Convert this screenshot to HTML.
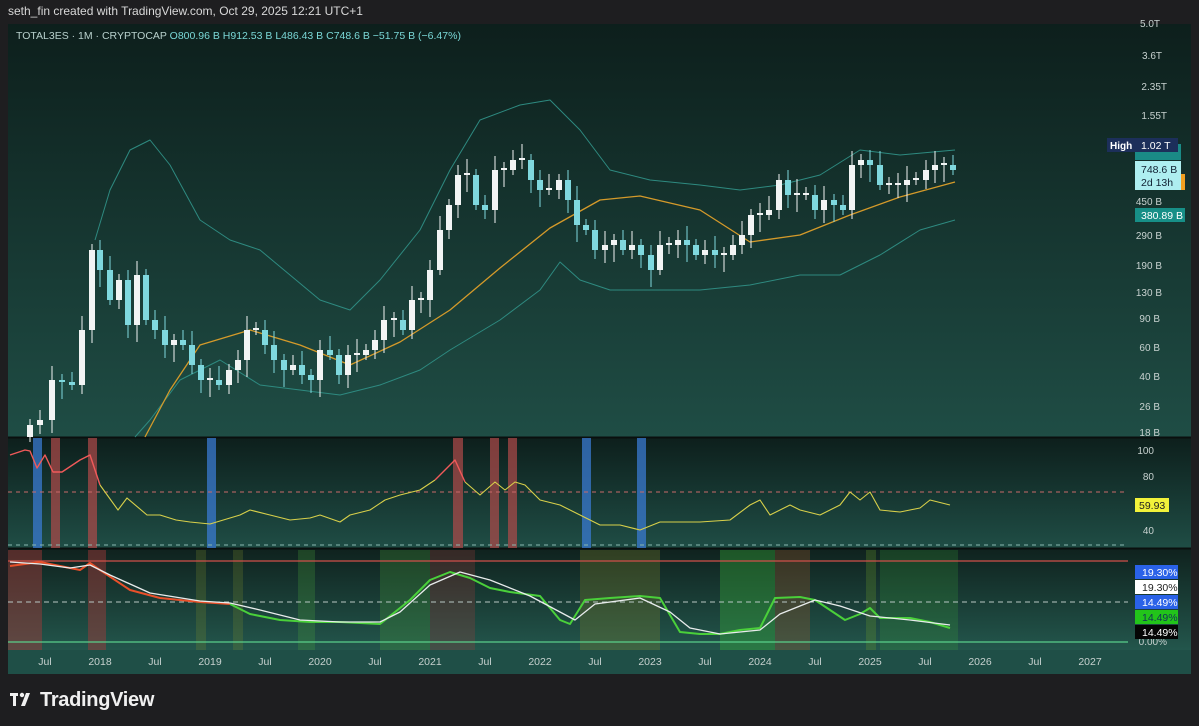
<!DOCTYPE html>
<html><head><meta charset="utf-8">
<style>
html,body{margin:0;padding:0;background:#1e1e20;width:1199px;height:726px;overflow:hidden;font-family:"Liberation Sans",sans-serif;}
#hdr{position:absolute;left:8px;top:4px;color:#d8d8d8;font-size:12px;}
#wrap{position:absolute;left:0;top:0;}
#logo{position:absolute;left:40px;top:689px;color:#f0f0f0;font-size:20px;font-weight:bold;letter-spacing:-0.3px;}
</style></head><body>
<div id="hdr">seth_fin created with TradingView.com, Oct 29, 2025 12:21 UTC+1</div>
<svg id="wrap" width="1199" height="726" xmlns="http://www.w3.org/2000/svg" font-family="Liberation Sans, sans-serif">
<defs>
<linearGradient id="gm" x1="0" y1="0" x2="0" y2="1"><stop offset="0" stop-color="#0d1f1c"/><stop offset="1" stop-color="#1f4d45"/></linearGradient>
<linearGradient id="gr" x1="0" y1="0" x2="0" y2="1"><stop offset="0" stop-color="#0d1f1c"/><stop offset="1" stop-color="#1f4d45"/></linearGradient>
<linearGradient id="gb" x1="0" y1="0" x2="0" y2="1"><stop offset="0" stop-color="#0f221e"/><stop offset="1" stop-color="#23564c"/></linearGradient>
</defs>
<rect x="8" y="24" width="1183" height="650" fill="#1f4d45"/>
<rect x="8" y="24" width="1183" height="413" fill="url(#gm)"/>
<rect x="8" y="438" width="1183" height="110" fill="url(#gr)"/>
<rect x="8" y="549" width="1183" height="101" fill="url(#gb)"/>
<rect x="8" y="650" width="1183" height="24" fill="#1f4f47"/>
<line x1="8" y1="437.5" x2="1191" y2="437.5" stroke="#0a0f0e" stroke-width="2"/>
<line x1="8" y1="548.5" x2="1191" y2="548.5" stroke="#0a0f0e" stroke-width="2"/>
<g id="bands"></g>
<g id="main"></g>
<text x="16" y="39" font-size="10.5" fill="#b8d0cc">TOTAL3ES · 1M · CRYPTOCAP <tspan fill="#7ad7d6">O800.96 B  H912.53 B  L486.43 B  C748.6 B  −51.75 B (−6.47%)</tspan></text>
<g font-size="10" fill="#c8d2d0" text-anchor="end">
<text x="1160" y="27">5.0T</text><text x="1162" y="59">3.6T</text><text x="1167" y="90">2.35T</text><text x="1167" y="119">1.55T</text>
<text x="1162" y="205">450 B</text><text x="1162" y="239">290 B</text><text x="1162" y="269">190 B</text><text x="1162" y="296">130 B</text>
<text x="1160" y="322">90 B</text><text x="1160" y="351">60 B</text><text x="1160" y="380">40 B</text><text x="1160" y="410">26 B</text><text x="1160" y="436">18 B</text>
<text x="1154" y="454">100</text><text x="1154" y="480">80</text><text x="1154" y="534">40</text>
<text x="1167" y="645">0.00%</text>
</g>
<rect x="1107" y="138" width="30" height="14" fill="#1c2f5a"/><text x="1110" y="149" font-size="10" font-weight="bold" fill="#fff">High</text>
<rect x="1135" y="144" width="46" height="16" fill="#1a8a86"/>
<rect x="1135" y="138" width="43" height="14" fill="#1c2f5a"/><text x="1141" y="149" font-size="10.5" fill="#fff">1.02 T</text>
<rect x="1180" y="174" width="5" height="16" fill="#f0a020"/>
<rect x="1135" y="161" width="46" height="29" fill="#aeeef0"/><text x="1141" y="173" font-size="10.5" fill="#123">748.6 B</text><text x="1141" y="186" font-size="10.5" fill="#123">2d 13h</text>
<rect x="1135" y="208" width="50" height="14" fill="#178f87"/><text x="1141" y="219" font-size="10.5" fill="#fff">380.89 B</text>
<rect x="1135" y="498" width="34" height="14" fill="#f2f23a"/><text x="1139" y="509" font-size="10.5" fill="#222">59.93</text>
<rect x="1135" y="565" width="43" height="14" fill="#2a62e8"/><text x="1142" y="576" font-size="10.5" fill="#fff">19.30%</text>
<rect x="1135" y="580" width="43" height="14" fill="#ffffff"/><text x="1142" y="591" font-size="10.5" fill="#222">19.30%</text>
<rect x="1135" y="595" width="43" height="14" fill="#2a62e8"/><text x="1142" y="606" font-size="10.5" fill="#fff">14.49%</text>
<rect x="1135" y="610" width="43" height="14" fill="#22c41a"/><text x="1142" y="621" font-size="10.5" fill="#135">14.49%</text>
<rect x="1135" y="625" width="43" height="14" fill="#050505"/><text x="1142" y="636" font-size="10.5" fill="#fff">14.49%</text>
<g font-size="10.5" fill="#c8d2d0" text-anchor="middle">
<text x="45" y="665">Jul</text><text x="100" y="665">2018</text><text x="155" y="665">Jul</text><text x="210" y="665">2019</text><text x="265" y="665">Jul</text><text x="320" y="665">2020</text><text x="375" y="665">Jul</text><text x="430" y="665">2021</text><text x="485" y="665">Jul</text><text x="540" y="665">2022</text><text x="595" y="665">Jul</text><text x="650" y="665">2023</text><text x="705" y="665">Jul</text><text x="760" y="665">2024</text><text x="815" y="665">Jul</text><text x="870" y="665">2025</text><text x="925" y="665">Jul</text><text x="980" y="665">2026</text><text x="1035" y="665">Jul</text><text x="1090" y="665">2027</text>
</g>
<g transform="translate(10,691)" fill="#f0f0f0"><rect x="0" y="2" width="8" height="3"/><rect x="3" y="2" width="3" height="13"/><circle cx="12" cy="4" r="2.2"/><path d="M16 2 L20 2 L15 15 L11 15 Z"/></g>
</svg>
<div id="logo">TradingView</div>
<script>
var NS="http://www.w3.org/2000/svg";
function el(p,t,a){var e=document.createElementNS(NS,t);for(var k in a)e.setAttribute(k,a[k]);document.getElementById(p).appendChild(e);return e;}
function pl(p,pts,c,w,d){el(p,"polyline",{points:pts.map(function(q){return q.join(",")}).join(" "),fill:"none",stroke:c,"stroke-width":w||1.2,"stroke-dasharray":d||"","stroke-linejoin":"round"});}
[[33,9,"#3a7ad0",.75],[207,9,"#3a7ad0",.75],[582,9,"#3a7ad0",.75],[637,9,"#3a7ad0",.75],[51,9,"#b04a4a",.7],[88,9,"#b04a4a",.7],[453,10,"#b04a4a",.7],[490,9,"#b04a4a",.7],[508,9,"#b04a4a",.7]].forEach(function(b){el("bands","rect",{x:b[0],y:438,width:b[1],height:110,fill:b[2],opacity:b[3]});});
[[8,34,"#a83a3a",.45],[88,18,"#a83a3a",.45],[196,10,"#7a8a2a",.25],[233,10,"#7a8a2a",.25],[298,17,"#4aa83a",.25],[380,50,"#4aa83a",.25],[430,45,"#a83a3a",.25],[580,80,"#8a8a2a",.28],[720,55,"#3ab83a",.35],[775,35,"#a85a2a",.28],[866,10,"#6a9a2a",.28],[880,78,"#3aa83a",.22]].forEach(function(b){el("bands","rect",{x:b[0],y:550,width:b[1],height:100,fill:b[2],opacity:b[3]});});
el("bands","line",{x1:8,y1:561,x2:1128,y2:561,stroke:"#d0504a","stroke-width":1.2});
el("bands","line",{x1:8,y1:602,x2:1128,y2:602,stroke:"#b8c8c4","stroke-dasharray":"5,4"});
el("bands","line",{x1:8,y1:642,x2:1128,y2:642,stroke:"#5ad08a","stroke-width":1.2});
el("bands","line",{x1:8,y1:492,x2:1128,y2:492,stroke:"#c86a6a","stroke-dasharray":"4,4"});
el("bands","line",{x1:8,y1:545,x2:1128,y2:545,stroke:"#8ab8b0","stroke-dasharray":"4,4"});
pl("main",[[95,240],[110,190],[130,150],[150,140],[170,165],[200,220],[230,240],[260,250],[290,275],[320,300],[350,310],[380,280],[420,230],[450,170],[480,120],[520,105],[550,100],[580,130],[610,170],[650,180],[700,185],[740,190],[780,185],[820,175],[860,150],[900,155],[955,150]],"#2e8a80",1);
pl("main",[[135,437],[150,420],[180,380],[220,360],[260,385],[300,390],[340,395],[380,385],[420,370],[450,350],[500,320],[540,290],[560,262],[580,280],[610,290],[650,290],[700,290],[750,285],[800,275],[840,275],[880,255],[920,230],[955,220]],"#2e8a80",1);
pl("main",[[145,437],[170,390],[200,345],[250,330],[300,345],[350,365],[400,342],[450,310],[500,268],[550,228],[600,200],[640,196],[700,210],[750,242],[800,235],[850,215],[900,197],[955,182]],"#d49a2a",1.3);
var c=[[30,425],[40,420],[52,380],[62,382],[72,385],[82,330],[92,250],[100,270],[110,300],[119,280],[128,325],[137,275],[146,320],[155,330],[165,345],[174,340],[183,345],[192,365],[201,380],[210,380],[219,385],[229,370],[238,360],[247,330],[256,330],[265,345],[274,360],[284,370],[293,365],[302,375],[311,380],[320,350],[330,355],[339,375],[348,355],[357,355],[366,350],[375,340],[384,320],[394,320],[403,330],[412,300],[421,300],[430,270],[440,230],[449,205],[458,175],[467,175],[476,205],[485,210],[495,170],[504,170],[513,160],[522,160],[531,180],[540,190],[549,190],[559,180],[568,200],[577,225],[586,230],[595,250],[605,245],[614,240],[623,250],[632,245],[641,255],[651,270],[660,245],[669,245],[678,240],[687,245],[696,255],[705,250],[715,255],[724,255],[733,245],[742,235],[751,215],[760,215],[769,210],[779,180],[788,195],[797,195],[806,195],[815,210],[824,200],[834,205],[843,210],[852,165],[861,160],[870,165],[880,185],[889,185],[898,185],[907,180],[916,180],[926,170],[935,165],[944,165],[953,170]];
var prev=437;
c.forEach(function(k,i){var o=prev,cl=k[1];if(Math.abs(o-cl)<2)cl=o-2;var t=Math.min(o,cl),b=Math.max(o,cl);var col=cl<o?"#f2f4f4":"#7fd8de";
el("main","line",{x1:k[0],y1:t-6-(i%3)*4,x2:k[0],y2:b+5+(i%4)*4,stroke:col,"stroke-width":1});
el("main","rect",{x:k[0]-3,y:t,width:6,height:b-t,fill:col});prev=k[1];});
pl("main",[[10,455],[25,450],[30,451],[37,468],[45,455],[53,472],[62,472],[80,460],[90,455],[100,485]],"#f05a5a",1.4);
pl("main",[[100,485],[118,510],[127,498],[147,515],[160,515],[176,520],[190,522],[210,524],[240,515],[250,510],[270,515],[290,520],[310,518],[320,515],[340,522],[350,515],[370,510],[385,500],[400,495],[420,490],[435,480]],"#d8d04a",1.1);
pl("main",[[435,480],[455,460],[465,482]],"#f05a5a",1.4);
pl("main",[[465,482],[480,495],[495,482],[505,490],[515,482],[525,485],[540,500],[560,505],[580,515],[600,525],[620,525],[640,530],[660,522],[700,522],[730,520],[750,505],[760,500],[770,515],[790,505],[800,510],[820,515],[840,505],[850,492],[860,500],[870,492],[880,510],[900,512],[920,508],[930,500],[950,505]],"#d8d04a",1.1);
pl("main",[[10,566],[40,562],[60,566],[80,570],[90,563],[100,570],[130,590],[160,598],[200,602],[230,604]],"#e8502a",2);
pl("main",[[230,604],[250,614],[280,620],[310,622],[340,622],[380,624],[395,612],[410,600],[430,580],[450,572],[470,578],[490,588],[510,592],[540,596],[560,620],[570,624],[585,600],[610,598],[640,596],[660,598],[680,632],[700,634],[720,634],[740,630],[760,628],[775,598],[800,597],[815,600],[830,610],[845,620],[860,614],[870,608],[880,618],[910,618],[930,622],[950,628]],"#4ad03a",2);
pl("main",[[10,562],[40,564],[70,568],[90,565],[110,575],[150,593],[200,601],[230,603],[260,610],[300,620],[340,622],[380,622],[400,612],[430,585],[460,572],[490,580],[530,596],[560,612],[575,620],[595,604],[640,598],[670,612],[690,628],[720,634],[760,630],[780,614],[815,600],[840,606],[870,616],[910,620],[950,625]],"#e8ecec",1.3);
</script>
</body></html>
